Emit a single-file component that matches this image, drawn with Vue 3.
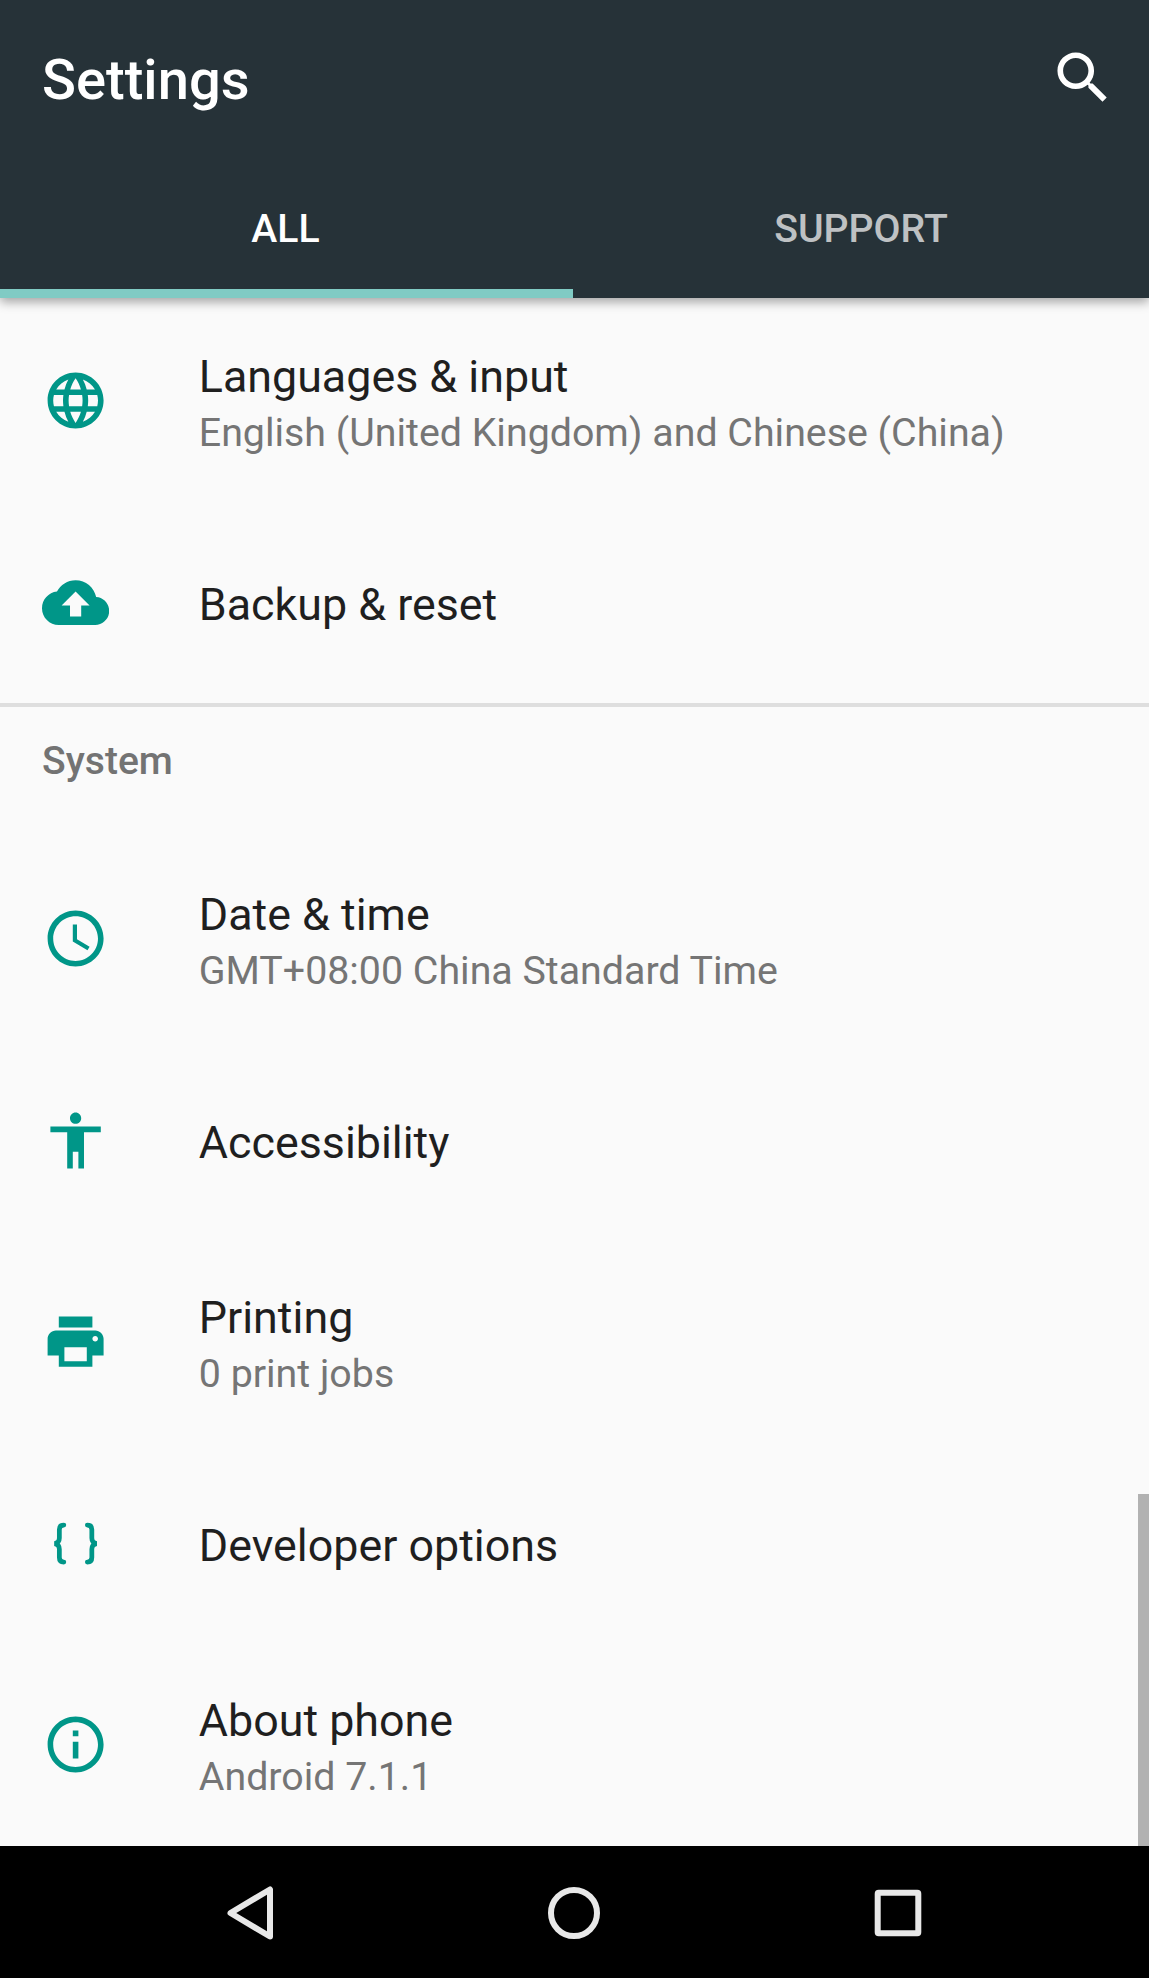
<script setup>
import { ref } from 'vue';

const tabs = ['ALL', 'SUPPORT'];
const currentTab = ref(0);

const icons = {
	globe:
		'M11.99 2C6.47 2 2 6.48 2 12s4.47 10 9.99 10C17.52 22 22 17.52 22 12S17.52 2 11.99 2zm6.93 6h-2.95c-.32-1.25-.78-2.45-1.38-3.56 1.84.63 3.37 1.91 4.33 3.56zM12 4.04c.83 1.2 1.48 2.53 1.91 3.96h-3.82c.43-1.43 1.08-2.76 1.91-3.96zM4.26 14C4.1 13.36 4 12.69 4 12s.1-1.36.26-2h3.38c-.08.66-.14 1.32-.14 2s.06 1.34.14 2H4.26zm.82 2h2.95c.32 1.25.78 2.45 1.38 3.56-1.84-.63-3.37-1.9-4.33-3.56zm2.95-8H5.08c.96-1.66 2.49-2.93 4.33-3.56C8.81 5.55 8.35 6.75 8.03 8zM12 19.96c-.83-1.2-1.48-2.53-1.91-3.96h3.82c-.43 1.43-1.08 2.76-1.91 3.96zM14.34 14H9.66c-.09-.66-.16-1.32-.16-2s.07-1.35.16-2h4.68c.09.65.16 1.32.16 2s-.07 1.34-.16 2zm.25 5.56c.6-1.11 1.06-2.31 1.38-3.56h2.95c-.96 1.65-2.49 2.93-4.33 3.56zM16.36 14c.08-.66.14-1.32.14-2s-.06-1.34-.14-2h3.38c.16.64.26 1.31.26 2s-.1 1.36-.26 2h-3.38z',
	cloud:
		'M19.35 10.04C18.67 6.59 15.64 4 12 4 9.11 4 6.6 5.64 5.35 8.04 2.34 8.36 0 10.91 0 14c0 3.31 2.69 6 6 6h13c2.76 0 5-2.24 5-5 0-2.64-2.05-4.78-4.65-4.96zM14 13v4h-4v-4H7l5-5 5 5h-3z',
	clock:
		'M11.99 2C6.47 2 2 6.48 2 12s4.47 10 9.99 10C17.52 22 22 17.52 22 12S17.52 2 11.99 2zM12 20c-4.42 0-8-3.58-8-8s3.58-8 8-8 8 3.58 8 8-3.58 8-8 8zm.5-13H11v6l5.25 3.15.75-1.23-4.5-2.67z',
	person: 'M12 2c1.1 0 2 .9 2 2s-.9 2-2 2-2-.9-2-2 .9-2 2-2zm9 7h-6v13h-2v-6h-2v6H9V9H3V7h18v2z',
	printer:
		'M19 8H5c-1.66 0-3 1.34-3 3v6h4v4h12v-4h4v-6c0-1.66-1.34-3-3-3zm-3 11H8v-5h8v5zm3-7c-.55 0-1-.45-1-1s.45-1 1-1 1 .45 1 1-.45 1-1 1zm-1-9H6v4h12V3z',
	braces:
		'M7.8 5.4C6.8 5.4 6.2 6 6.2 7v3c0 1.2-.6 1.8-1.7 2 1.1.2 1.7.8 1.7 2v3c0 1 .6 1.6 1.6 1.6M16.2 5.4c1 0 1.6.6 1.6 1.6v3c0 1.2.6 1.8 1.7 2-1.1.2-1.7.8-1.7 2v3c0 1-.6 1.6-1.6 1.6',
	info: 'M11 17h2v-6h-2v6zm1-15C6.48 2 2 6.48 2 12s4.48 10 10 10 10-4.48 10-10S17.52 2 12 2zm0 18c-4.41 0-8-3.59-8-8s3.59-8 8-8 8 3.59 8 8-3.59 8-8 8zM11 9h2V7h-2v2z',
};

const groups = [
	{
		title: '',
		items: [
			{ icon: 'globe', name: 'Languages & input', desc: 'English (United Kingdom) and Chinese (China)' },
			{ icon: 'cloud', name: 'Backup & reset' },
		],
	},
	{
		title: 'System',
		items: [
			{ icon: 'clock', name: 'Date & time', desc: 'GMT+08:00 China Standard Time' },
			{ icon: 'person', name: 'Accessibility' },
			{ icon: 'printer', name: 'Printing', desc: '0 print jobs' },
			{ icon: 'braces', name: 'Developer options' },
			{ icon: 'info', name: 'About phone', desc: 'Android 7.1.1' },
		],
	},
];
</script>

<template>
	<div class="screen">
		<header>
			<div class="title_bar">
				<h1>Settings</h1>
				<button class="search" aria-label="Search">
					<svg viewBox="0 0 24 24">
						<path
							d="M15.5 14h-.79l-.28-.27C15.41 12.59 16 11.11 16 9.5 16 5.91 13.09 3 9.5 3S3 5.91 3 9.5 5.91 16 9.5 16c1.61 0 3.09-.59 4.23-1.57l.27.28v.79l5 4.99L20.49 19l-4.99-5zm-6 0C7.01 14 5 11.99 5 9.5S7.01 5 9.5 5 14 7.01 14 9.5 11.99 14 9.5 14z"
						/>
					</svg>
				</button>
			</div>
			<nav class="tabs">
				<button v-for="(tab, i) in tabs" :key="tab" :class="{ on: currentTab === i }" @click="currentTab = i">
					{{ tab }}
				</button>
			</nav>
		</header>

		<main>
			<section v-for="(group, i) in groups" :key="i">
				<h2 v-if="group.title">{{ group.title }}</h2>
				<ul>
					<li v-for="item in group.items" :key="item.name">
						<svg viewBox="0 0 24 24" :class="{ line: item.icon === 'braces' }">
							<path :d="icons[item.icon]" />
						</svg>
						<div class="text">
							<p class="name">{{ item.name }}</p>
							<p v-if="item.desc" class="desc">{{ item.desc }}</p>
						</div>
					</li>
				</ul>
			</section>
			<span class="scrollbar"></span>
		</main>

		<footer>
			<button aria-label="Back">
				<svg viewBox="0 0 68 68"><path d="M54 10.5v47L14.5 34z" /></svg>
			</button>
			<button aria-label="Home">
				<svg viewBox="0 0 68 68"><circle cx="34" cy="34" r="23" /></svg>
			</button>
			<button aria-label="Recent apps">
				<svg viewBox="0 0 68 68"><rect x="13.7" y="13.7" width="40.6" height="40.6" rx="1" /></svg>
			</button>
		</footer>
	</div>
</template>

<style>
body {
	margin: 0;
	background: #fafafa;
}
</style>

<style scoped>
.screen {
	display: flex;
	flex-direction: column;
	height: 1978px;
	overflow: hidden;
	background: #fafafa;
	font-family: Roboto, 'Noto Sans', sans-serif;
}
h1,
h2,
p,
ul {
	margin: 0;
	padding: 0;
	list-style: none;
}
button {
	padding: 0;
	border: 0 none;
	background: none;
	font-family: inherit;
	cursor: pointer;
}
svg {
	display: block;
	flex: none;
}
header {
	display: flex;
	position: relative;
	z-index: 1;
	flex: none;
	flex-direction: column;
	height: 298.4px;
	background: #263238;
	box-shadow: 0 4px 10px rgba(0, 0, 0, 0.35);
}
.title_bar {
	display: flex;
	align-items: center;
	justify-content: space-between;
	height: 160px;
	padding: 0 32px 0 42px;
}
h1 {
	color: #fff;
	font-size: 56.1px;
	font-weight: 500;
	line-height: 66px;
}
.search svg {
	width: 67.6px;
	height: 67.6px;
	margin-bottom: 5px;
	fill: #fff;
}
.tabs {
	display: flex;
	flex: 1;
}
.tabs button {
	flex: 1;
	padding-top: 9px;
	border-bottom: 9px solid transparent;
	color: #bec1c3;
	font-size: 39.2px;
	font-weight: 500;
}
.tabs button:first-child {
	flex: none;
	width: 573px;
	padding-right: 2px;
}
.tabs button.on {
	border-color: #80cbc4;
	color: #fff;
}
main {
	position: relative;
	flex: 1;
	padding-top: 1.6px;
}
section + section {
	border-top: 4px solid #dedede;
}
h2 {
	height: 130.6px;
	padding-left: 42px;
	color: #737373;
	font-size: 39.1px;
	font-weight: 500;
	line-height: 109px;
}
li {
	display: flex;
	align-items: center;
	height: 201.6px;
	padding-left: 42px;
}
li svg {
	width: 67.2px;
	height: 67.2px;
	fill: #009688;
}
li svg.line {
	fill: none;
	stroke: #009688;
	stroke-width: 1.7;
	stroke-linecap: round;
}
.text {
	padding-top: 5px;
	margin-left: 89.6px;
	white-space: nowrap;
}
.name {
	color: #1f1f1f;
	font-size: 44.8px;
	line-height: 60px;
}
.desc {
	color: #757575;
	font-size: 39.35px;
	line-height: 52.6px;
}
.scrollbar {
	position: absolute;
	right: 0;
	bottom: 0;
	width: 11px;
	height: 352px;
	background: #b2b2b2;
}
footer {
	display: flex;
	flex: none;
	align-items: center;
	justify-content: center;
	box-sizing: border-box;
	height: 132.4px;
	padding: 2px 2px 0 0;
	background: #000;
}
footer button {
	display: flex;
	justify-content: center;
	width: 324px;
}
footer svg {
	width: 68px;
	height: 68px;
	fill: none;
	stroke: #e8e8e8;
	stroke-width: 6;
	stroke-linejoin: round;
}
</style>
